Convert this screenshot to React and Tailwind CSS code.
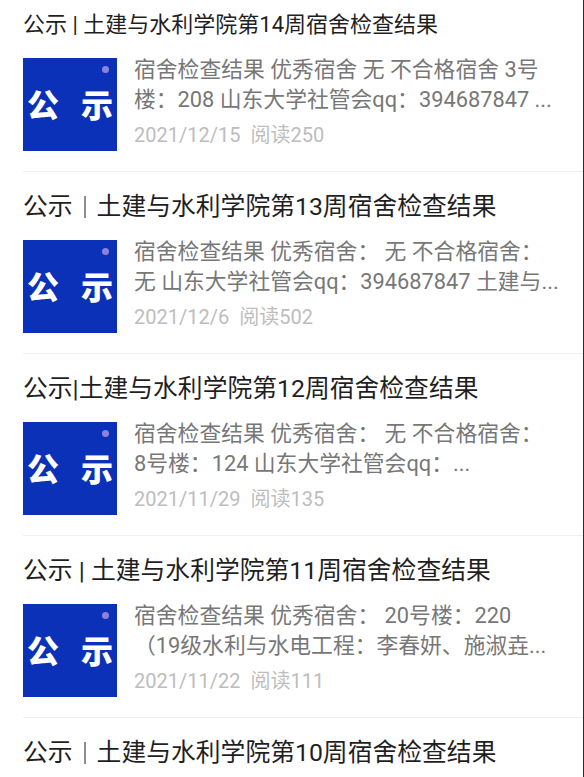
import React from 'react';

// full-width divider bar in titles 2 and 5
const Bar = () => <span className="inline-block w-[2px] h-[22px] mx-[11px] bg-[#8f8f8f] align-[-3px]" />;

const ITEMS = [
  {
    title: '公示 | 土建与水利学院第14周宿舍检查结果',
    small: true,
    lines: ['宿舍检查结果 优秀宿舍 无 不合格宿舍 3号', '楼：208 山东大学社管会qq：394687847 ...'],
    date: '2021/12/15',
    reads: 250,
  },
  {
    title: (
      <>
        公示<Bar />土建与水利学院第13周宿舍检查结果
      </>
    ),
    lines: ['宿舍检查结果 优秀宿舍： 无 不合格宿舍：', '无 山东大学社管会qq：394687847 土建与...'],
    date: '2021/12/6',
    reads: 502,
  },
  {
    title: '公示|土建与水利学院第12周宿舍检查结果',
    lines: ['宿舍检查结果 优秀宿舍： 无 不合格宿舍：', '8号楼：124 山东大学社管会qq：...'],
    date: '2021/11/29',
    reads: 135,
  },
  {
    title: '公示 | 土建与水利学院第11周宿舍检查结果',
    lines: ['宿舍检查结果 优秀宿舍： 20号楼：220', '（19级水利与水电工程：李春妍、施淑垚...'],
    date: '2021/11/22',
    reads: 111,
  },
];

const font = { fontFamily: 'Roboto, "Noto Sans CJK SC", sans-serif' };

function Thumb() {
  return (
    <div className="relative w-[94px] h-[93px] shrink-0 bg-[#0b31b9] flex items-center justify-center gap-[22px]">
      <span className="absolute top-[8px] right-[8px] w-[7px] h-[7px] rounded-full bg-[#8c82dc]" />
      <span className="text-white text-[32px] font-black leading-none mt-[2px]">公</span>
      <span className="text-white text-[32px] font-black leading-none mt-[2px]">示</span>
    </div>
  );
}

function Item({ item, first }) {
  return (
    <div className={`pl-[23px] ${first ? 'pt-[9px]' : 'pt-[19px]'}`}>
      <div
        className={`${item.small ? 'text-[22px]' : 'text-[24.8px]'} h-[32px] leading-[32px] text-[#1f1f1f] whitespace-nowrap`}
      >
        {item.title}
      </div>
      <div className="flex mt-[17px] pb-[20px] border-b border-[#efefef]">
        <Thumb />
        <div className="pl-[17px] -mt-[3px]">
          {item.lines.map((l, i) => (
            <div key={i} className="text-[21.8px] leading-[30px] text-[#777777] whitespace-nowrap">
              {l}
            </div>
          ))}
          <div className="text-[20px] leading-[24px] mt-[8px] text-[#bdbdbd] whitespace-nowrap">
            {item.date}
            <span className="ml-[10px]">阅读{item.reads}</span>
          </div>
        </div>
      </div>
    </div>
  );
}

export default function App() {
  return (
    <div className="w-[584px] h-[777px] overflow-hidden bg-white border-r border-[#2a2a2a]" style={font}>
      {ITEMS.map((it, i) => (
        <Item key={i} item={it} first={i === 0} />
      ))}
      <div className="pl-[23px] pt-[19px]">
        <div className="text-[24.8px] h-[32px] leading-[32px] text-[#1f1f1f] whitespace-nowrap">
          公示<Bar />土建与水利学院第10周宿舍检查结果
        </div>
      </div>
    </div>
  );
}
